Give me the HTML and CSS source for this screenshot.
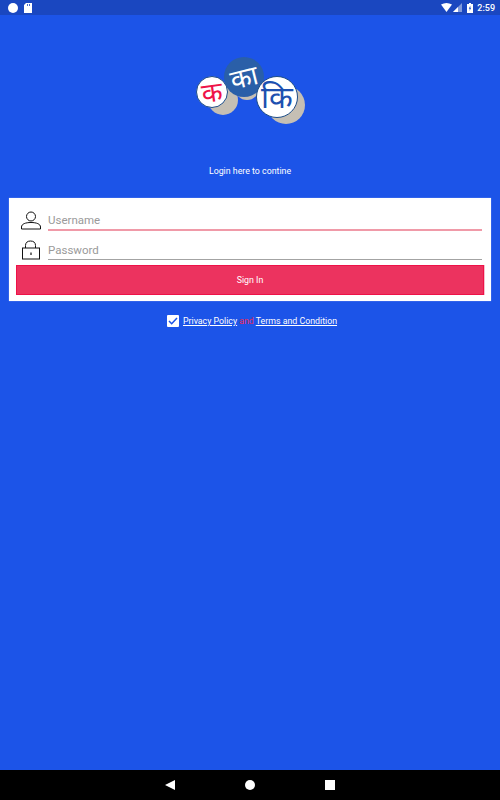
FILE: index.html
```html
<!DOCTYPE html>
<html lang="en">
<head>
    <meta charset="UTF-8">
    <meta name="viewport" content="width=device-width, initial-scale=1.0">
    <title>Login</title>
    <link rel="stylesheet" href="styles.css">
</head>
<body>

<div class="status-bar">
    <div class="status-left">
        <span class="status-dot"></span>
        <svg class="status-card" width="8" height="10" viewBox="0 0 8 10"><path d="M2 0H8V10H0V2Z" fill="#fff"/><path d="M3.5 1V3M5.5 1V3" stroke="#1a47c0" stroke-width="0.8"/></svg>
    </div>
    <div class="status-right">
        <svg width="11" height="9" viewBox="0 0 11 9"><path d="M0 1.5Q5.5-1.5 11 1.5L5.5 9Z" fill="#fff"/></svg>
        <svg width="9" height="9" viewBox="0 0 9 9"><path d="M9 0V9H0Z" fill="#fff" opacity="0.45"/><path d="M5 4V9H0Z" fill="#fff"/></svg>
        <svg class="status-battery" width="6" height="10" viewBox="0 0 6 10"><path d="M2 0H4V1H6V10H0V1H2Z" fill="#fff"/><path d="M3.4 2.5L1.8 5.8H2.8L2.5 8L4.2 4.8H3.2Z" fill="#1a47c0"/></svg>
        <span class="status-time">2:59</span>
    </div>
</div>

<main class="screen">
    <svg class="logo" width="112" height="72" viewBox="0 0 112 72">
        <circle cx="52" cy="33" r="12" fill="#c5bfb4"/>
        <circle cx="28" cy="45" r="15" fill="#c5bfb4"/>
        <circle cx="91" cy="50" r="19" fill="#c5bfb4"/>
        <circle cx="49" cy="22" r="20" fill="#2a5fa8"/>
        <circle cx="17" cy="37" r="15.5" fill="#fff" stroke="#1d4d86"/>
        <circle cx="82" cy="42" r="20.5" fill="#fff" stroke="#1d4d86"/>
        <text class="logo-letter" x="17" y="47" font-size="27" fill="#ee1248" text-anchor="middle" transform="rotate(-8 17 37)">क</text>
        <text class="logo-letter" x="49" y="32" font-size="27" fill="#fff" text-anchor="middle" transform="rotate(-14 49 22)">का</text>
        <text class="logo-letter" x="82" y="53" font-size="31" fill="#1d50b0" text-anchor="middle">कि</text>
    </svg>

    <p class="tagline">Login here to contine</p>

    <form class="login-card">
        <div class="field">
            <svg class="field-icon" width="20" height="20" viewBox="0 0 20 20" fill="none" stroke="#111" stroke-width="1">
                <circle cx="10" cy="5.5" r="4.5"/>
                <path d="M0.5 18V16C0.5 13 4.5 11.5 10 11.5S19.5 13 19.5 16V18Z"/>
            </svg>
            <div class="field-text active">Username</div>
        </div>
        <div class="field">
            <svg class="field-icon" width="20" height="20" viewBox="0 0 20 20" fill="none" stroke="#111" stroke-width="1">
                <path d="M4.5 8V5.5C4.5 2.5 6.5 1 9.5 1S14.5 2.5 14.5 5.5V8"/>
                <rect x="1.5" y="8" width="17" height="11"/>
                <path d="M10 12.5V15" stroke-width="1.2"/>
            </svg>
            <div class="field-text">Password</div>
        </div>
        <button class="sign-in" type="button">Sign In</button>
    </form>

    <div class="agree">
        <span class="agree-box">
            <svg width="10" height="8" viewBox="0 0 10 8" fill="none" stroke="#1c54e8" stroke-width="1.5"><path d="M1 4L3.7 6.7L9 1"/></svg>
        </span>
        <a class="agree-link">Privacy Policy</a>
        <span class="agree-and">and</span>
        <a class="agree-link">Terms and Condition</a>
    </div>
</main>

<div class="nav-bar">
    <span class="nav-back"></span>
    <span class="nav-home"></span>
    <span class="nav-recent"></span>
</div>

</body>
</html>
```

FILE: styles.css
```css
html, body {
    height: 100%;
}
body {
    display: flex;
    flex-direction: column;
    height: 800px;
    margin: 0;
    overflow: hidden;
    font-family: Roboto, "Liberation Sans", sans-serif;
    background-color: #1c54e8;
}
.status-bar {
    display: flex;
    justify-content: space-between;
    align-items: center;
    flex-shrink: 0;
    height: 15px;
    padding: 0 5px 0 8px;
    background-color: #1a47c0;
}
.status-left, .status-right {
    display: flex;
    align-items: center;
}
.status-dot {
    width: 10px;
    height: 10px;
    border-radius: 50%;
    background-color: #fff;
}
.status-card {
    margin-left: 6px;
}
.status-right svg {
    margin-right: 1px;
}
.status-battery {
    margin-left: 4px;
}
.status-time {
    margin-left: 3px;
    font-size: 9px;
    font-weight: 500;
    color: #fff;
}
.screen {
    display: flex;
    flex-direction: column;
    align-items: center;
    flex: 1;
    padding: 40px 9px 0;
}
.logo {
    margin-left: 2px;
}
.logo-letter {
    font-family: "Noto Sans", "DejaVu Sans", sans-serif;
}
.tagline {
    margin: 38px 0 0;
    font-size: 8.8px;
    line-height: 12px;
    color: #fff;
}
.login-card {
    align-self: stretch;
    display: flex;
    flex-direction: column;
    margin-top: 21px;
    padding: 8px 7px 6px;
    background-color: #fff;
    box-shadow: 0 0 1px #9db4f0;
}
.field {
    display: flex;
    align-items: flex-end;
    height: 29px;
    padding: 0 2px 0 5px;
}
.field:first-child {
    height: 25px;
}
.field-icon {
    flex-shrink: 0;
    margin: 0 7px 0 0;
}
.field-text {
    flex: 1;
    height: 18px;
    font-size: 11.5px;
    line-height: 18px;
    color: #9a9a9a;
    border-bottom: 1px solid #a3a3a3;
}
.field-text.active {
    border-bottom: 2px solid #f09aa8;
}
.sign-in {
    height: 30px;
    margin: 5px 0 0;
    padding: 0;
    font-family: inherit;
    font-size: 8.8px;
    color: #fff;
    background-color: #ec335f;
    border: 1px solid #ee1248;
    box-shadow: 1px 0 0 #f6c0cd;
}
.agree {
    display: flex;
    align-items: center;
    margin: 14px 0 0 4px;
    font-size: 8.8px;
    color: #fff;
}
.agree-box {
    display: flex;
    justify-content: center;
    align-items: center;
    width: 12px;
    height: 12px;
    margin-right: 4px;
    background-color: #fff;
    border-radius: 1px;
}
.agree-link {
    text-decoration: underline;
}
.agree-and {
    margin: 0 2px;
    color: #ee2a58;
}
.nav-bar {
    display: flex;
    justify-content: center;
    align-items: center;
    gap: 70px;
    flex-shrink: 0;
    height: 30px;
    background-color: #000;
}
.nav-back {
    width: 0;
    height: 0;
    border-top: 5px solid transparent;
    border-bottom: 5px solid transparent;
    border-right: 10px solid #fff;
}
.nav-home {
    width: 10px;
    height: 10px;
    border-radius: 50%;
    background-color: #fff;
}
.nav-recent {
    width: 10px;
    height: 10px;
    background-color: #fff;
}
```
